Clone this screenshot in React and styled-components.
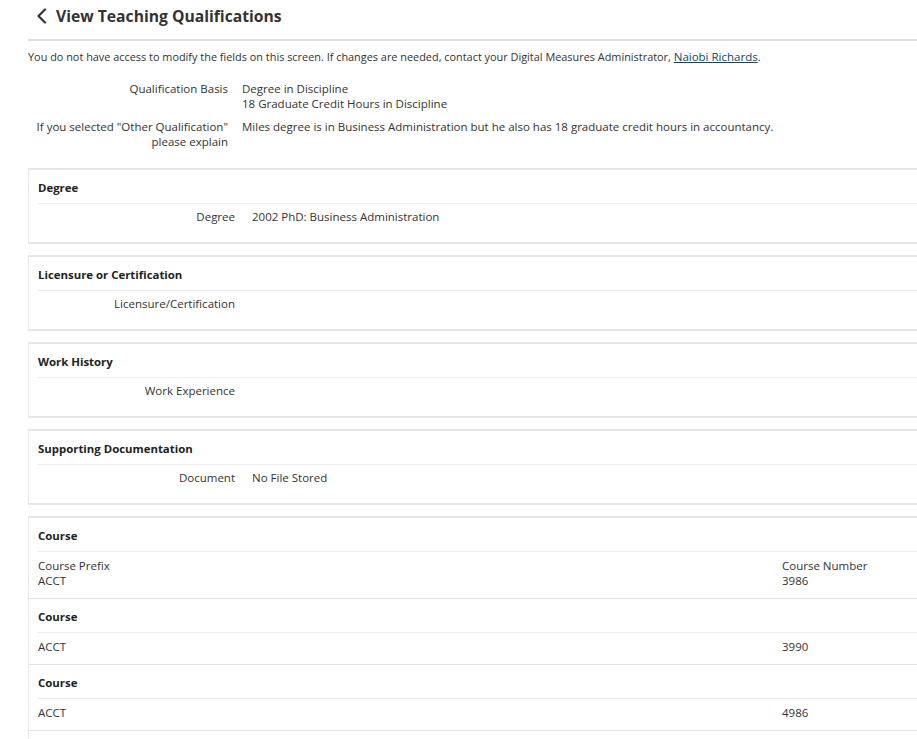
import styled, { createGlobalStyle } from "styled-components"

const GlobalStyle = createGlobalStyle`
  html, body {
    margin: 0;
    padding: 0;
    background: #fff;
    overflow: hidden;
  }
  body {
    font-family: "Open Sans", "Noto Sans", sans-serif;
    color: #333;
  }
`

const qualification = [
  { label: "Qualification Basis", values: ["Degree in Discipline", "18 Graduate Credit Hours in Discipline"] },
  {
    label: ["If you selected \"Other Qualification\"", "please explain"],
    values: ["Miles degree is in Business Administration but he also has 18 graduate credit hours in accountancy."],
  },
]

const sections = [
  { title: "Degree", label: "Degree", value: "2002 PhD: Business Administration" },
  { title: "Licensure or Certification", label: "Licensure/Certification", value: "" },
  { title: "Work History", label: "Work Experience", value: "" },
  { title: "Supporting Documentation", label: "Document", value: "No File Stored" },
]

const courses = [
  { prefix: "ACCT", number: "3986", showLabels: true },
  { prefix: "ACCT", number: "3990" },
  { prefix: "ACCT", number: "4986" },
]

const ChevronLeft = () => (
  <svg width="12" height="16" viewBox="0 0 12 16" fill="none">
    <path d="M9 1.5 L2.5 8 L9 14.5" stroke="#333" strokeWidth="2.2" strokeLinecap="round" strokeLinejoin="round" />
  </svg>
)

const App = () => {
  return (
    <>
      <GlobalStyle />
      <Page>
        <Header>
          <BackButton href="/" onClick={e => e.preventDefault()}>
            <ChevronLeft />
          </BackButton>
          <Title>View Teaching Qualifications</Title>
        </Header>

        <Notice>
          You do not have access to modify the fields on this screen. If changes are needed, contact your Digital
          Measures Administrator, <a href="/" onClick={e => e.preventDefault()}>Naiobi Richards</a>.
        </Notice>

        <TopFields>
          {qualification.map((q, i) => (
            <FieldRow key={i} $labelWidth={200} $gap={14}>
              <Label>
                {Array.isArray(q.label) ? q.label.map(l => <div key={l}>{l}</div>) : q.label}
              </Label>
              <Value>
                {q.values.map(v => <div key={v}>{v}</div>)}
              </Value>
            </FieldRow>
          ))}
        </TopFields>

        {sections.map(s => (
          <Card key={s.title}>
            <CardTitle>{s.title}</CardTitle>
            <Divider />
            <FieldRow $labelWidth={197} $gap={17}>
              <Label>{s.label}</Label>
              <Value>{s.value}</Value>
            </FieldRow>
            <Spacer />
          </Card>
        ))}

        <Card $tall>
          {courses.map((c, i) => (
            <CourseBlock key={i}>
              <CardTitle>Course</CardTitle>
              <Divider />
              <CourseGrid>
                <div>
                  {c.showLabels && <div>Course Prefix</div>}
                  <div>{c.prefix}</div>
                </div>
                <div>
                  {c.showLabels && <div>Course Number</div>}
                  <div>{c.number}</div>
                </div>
              </CourseGrid>
            </CourseBlock>
          ))}
        </Card>
      </Page>
    </>
  )
}

export default App

const Page = styled.div`
  width: 1100px;
  padding-left: 28px;
`

const Header = styled.div`
  display: flex;
  align-items: center;
  gap: 8px;
  height: 39px;
  padding-left: 8px;
  border-bottom: 2px solid #dedede;
`

const BackButton = styled.a`
  display: flex;
  align-items: center;
  width: 12px;
  margin-top: -8px;
`

const Title = styled.h1`
  margin: 0 0 8px;
  font-size: 15.7px;
  font-weight: 700;
  color: #333;
`

const Notice = styled.p`
  margin: 0;
  padding-top: 8px;
  font-size: 10.9px;
  line-height: 16px;
  color: #333;

  a {
    color: #0b4a66;
    text-decoration: underline;
    font-size: 11.5px;
  }
`

const TopFields = styled.div`
  display: flex;
  flex-direction: column;
  gap: 8px;
  padding-top: 16px;
  padding-bottom: 19px;
`

const FieldRow = styled.div`
  display: grid;
  grid-template-columns: ${p => p.$labelWidth}px 1fr;
  column-gap: ${p => p.$gap}px;
  font-size: 11.5px;
  line-height: 15px;
`

const Label = styled.div`
  text-align: right;
  color: #333;
`

const Value = styled.div`
  color: #333;
`

const Card = styled.section`
  border: 1px solid #e6e6e6;
  border-top-width: 2px;
  border-bottom-width: 2px;
  margin-bottom: 11px;
  padding: 0 0 ${p => (p.$tall ? "40px" : "0")} 9px;
`

const CardTitle = styled.div`
  font-size: 11.4px;
  font-weight: 700;
  line-height: 14px;
  padding: 11px 0 8px;
  color: #222;
`

const Divider = styled.div`
  height: 1px;
  background: #ededed;
  margin-bottom: 5px;
`

const Spacer = styled.div`
  height: 18px;
`

const CourseBlock = styled.div`
  margin-left: -9px;
  padding-left: 9px;
  border-bottom: 1px solid #e2e2e2;
`

const CourseGrid = styled.div`
  display: grid;
  grid-template-columns: 744px 1fr;
  font-size: 11.5px;
  line-height: 15px;
  padding-top: 1px;
  padding-bottom: 10px;
`
